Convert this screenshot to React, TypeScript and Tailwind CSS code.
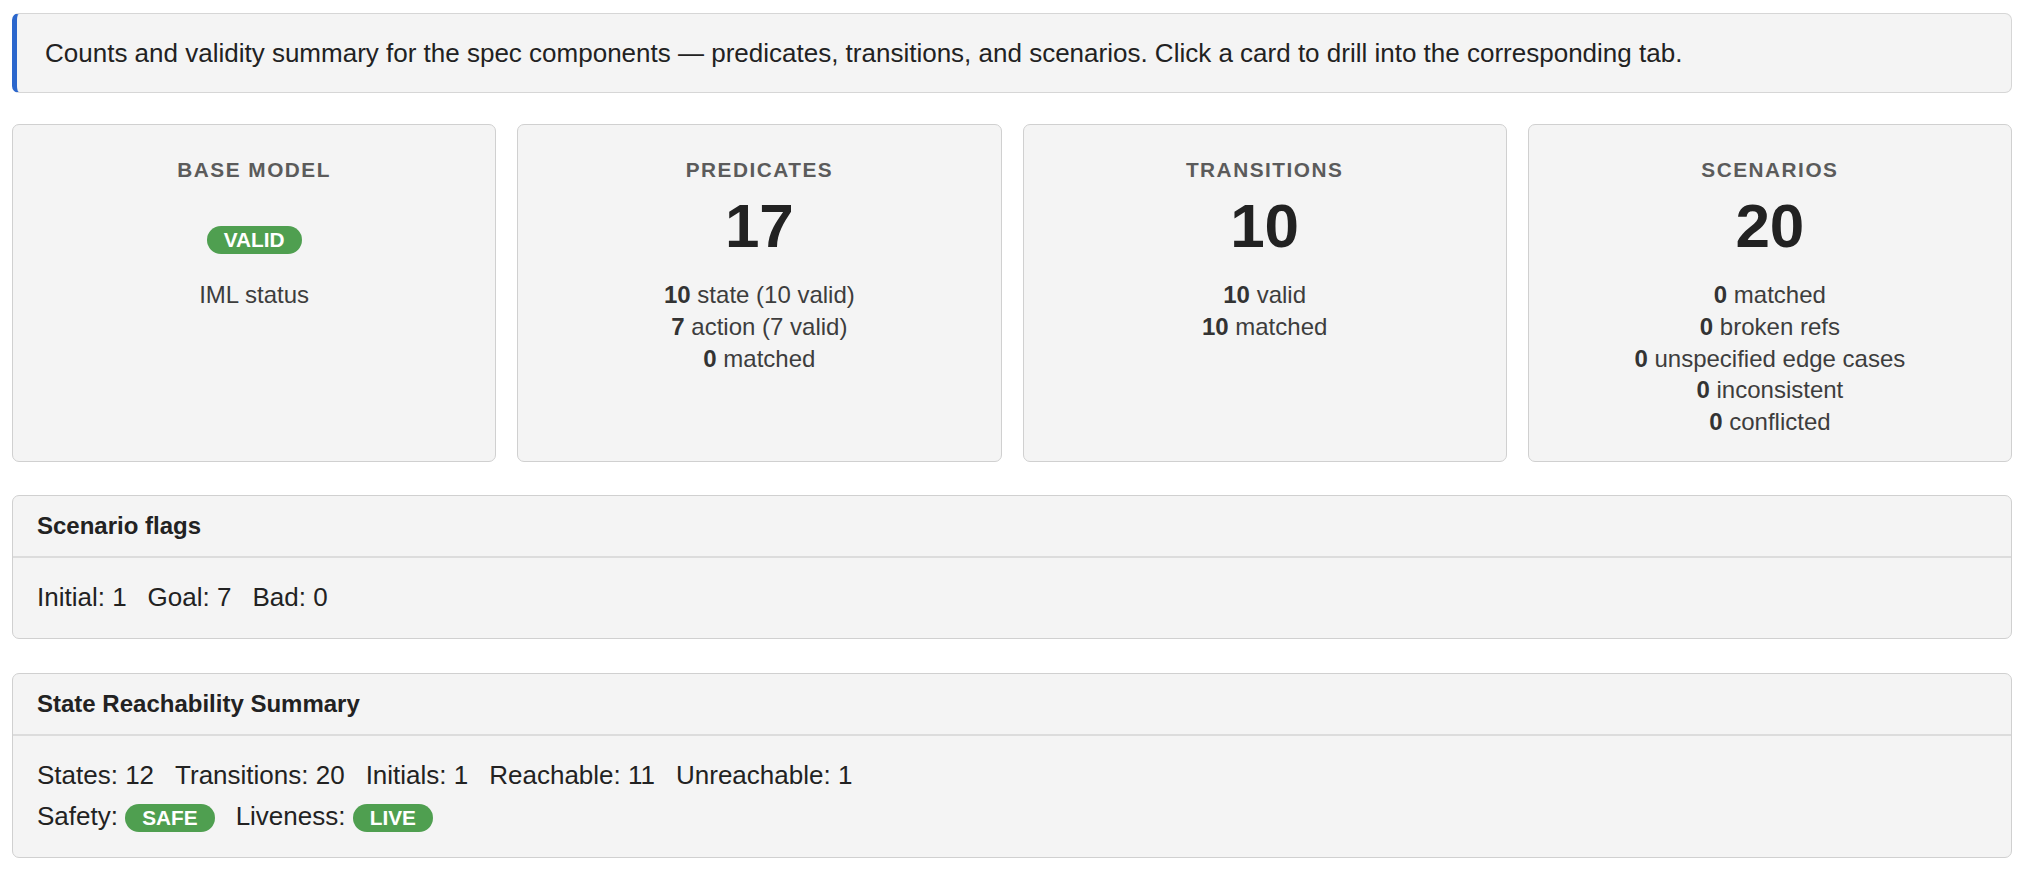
import React from "react";

type Line = { n: string; label: string };

type Card = {
    title: string;
    value?: string;
    badge?: string;
    lines: Line[];
    note?: string;
};

const cards: Card[] = [
    { title: "Base model", badge: "valid", lines: [], note: "IML status" },
    {
        title: "Predicates",
        value: "17",
        lines: [
            { n: "10", label: "state (10 valid)" },
            { n: "7", label: "action (7 valid)" },
            { n: "0", label: "matched" },
        ],
    },
    {
        title: "Transitions",
        value: "10",
        lines: [
            { n: "10", label: "valid" },
            { n: "10", label: "matched" },
        ],
    },
    {
        title: "Scenarios",
        value: "20",
        lines: [
            { n: "0", label: "matched" },
            { n: "0", label: "broken refs" },
            { n: "0", label: "unspecified edge cases" },
            { n: "0", label: "inconsistent" },
            { n: "0", label: "conflicted" },
        ],
    },
];

function Badge({ children }: { children: React.ReactNode }) {
    return (
        <span className="inline-block rounded-full bg-[#4f9f50] px-[17px] text-[20.8px] leading-[28px] font-bold uppercase text-white align-baseline">
            {children}
        </span>
    );
}

function SummaryCard({ card }: { card: Card }) {
    return (
        <button className="flex flex-col items-center rounded-[7px] border border-[#d0d0d0] bg-[#f4f4f4] px-[16px] pt-[31px] pb-[23px] text-center cursor-pointer">
            <div className="text-[20.8px] leading-[28px] font-bold uppercase tracking-[1.5px] text-[#5b5b5b]">
                {card.title}
            </div>
            <div className="mt-[11px] h-[62px] text-[62px] leading-[62px] font-bold text-[#222]">
                {card.badge ? <Badge>{card.badge}</Badge> : card.value}
            </div>
            <div className="mt-[22px] flex flex-col text-[24px] leading-[31.8px] text-[#3d3d3d]">
                {card.note && <span>{card.note}</span>}
                {card.lines.map((l, i) => (
                    <span key={i}>
                        <b className="text-[#333]">{l.n}</b> {l.label}
                    </span>
                ))}
            </div>
        </button>
    );
}

function Panel({ title, children }: { title: string; children: React.ReactNode }) {
    return (
        <section className="rounded-[7px] border border-[#d0d0d0] bg-[#f4f4f4]">
            <div className="border-b-2 border-[#dcdcdc] px-[24px] py-[14px] text-[24px] leading-[32px] font-bold text-[#222]">
                {title}
            </div>
            <div className="flex flex-col gap-[8px] px-[24px] pt-[23px] pb-[24px] text-[26px] leading-[33px] text-[#222]">
                {children}
            </div>
        </section>
    );
}

export default function App() {
    return (
        <div className="min-h-screen bg-white px-[12px] pt-[13px] font-['Liberation_Sans',Arial,sans-serif]">
            {/* Intro banner */}
            <div className="rounded-[7px] border border-l-[5px] border-[#d6d6d6] border-l-[#2b66cc] bg-[#f4f4f4] py-[23px] pl-[28px] text-[26px] leading-[32px] text-[#222]">
                Counts and validity summary for the spec components — predicates, transitions, and scenarios. Click a card to drill into the corresponding tab.
            </div>

            {/* Summary cards */}
            <div className="mt-[31px] grid grid-cols-4 gap-[21px]">
                {cards.map((c) => (
                    <SummaryCard key={c.title} card={c} />
                ))}
            </div>

            {/* Scenario flags */}
            <div className="mt-[33px]">
                <Panel title="Scenario flags">
                    <div className="flex h-[33px] items-center gap-x-[21px]">
                        <span>Initial: 1</span>
                        <span>Goal: 7</span>
                        <span>Bad: 0</span>
                    </div>
                </Panel>
            </div>

            {/* Reachability */}
            <div className="mt-[34px]">
                <Panel title="State Reachability Summary">
                    <div className="flex h-[33px] items-center gap-x-[21px]">
                        <span>States: 12</span>
                        <span>Transitions: 20</span>
                        <span>Initials: 1</span>
                        <span>Reachable: 11</span>
                        <span>Unreachable: 1</span>
                    </div>
                    <div className="flex h-[33px] items-center gap-x-[21px]">
                        <span>
                            Safety: <Badge>safe</Badge>
                        </span>
                        <span>
                            Liveness: <Badge>live</Badge>
                        </span>
                    </div>
                </Panel>
            </div>
        </div>
    );
}
